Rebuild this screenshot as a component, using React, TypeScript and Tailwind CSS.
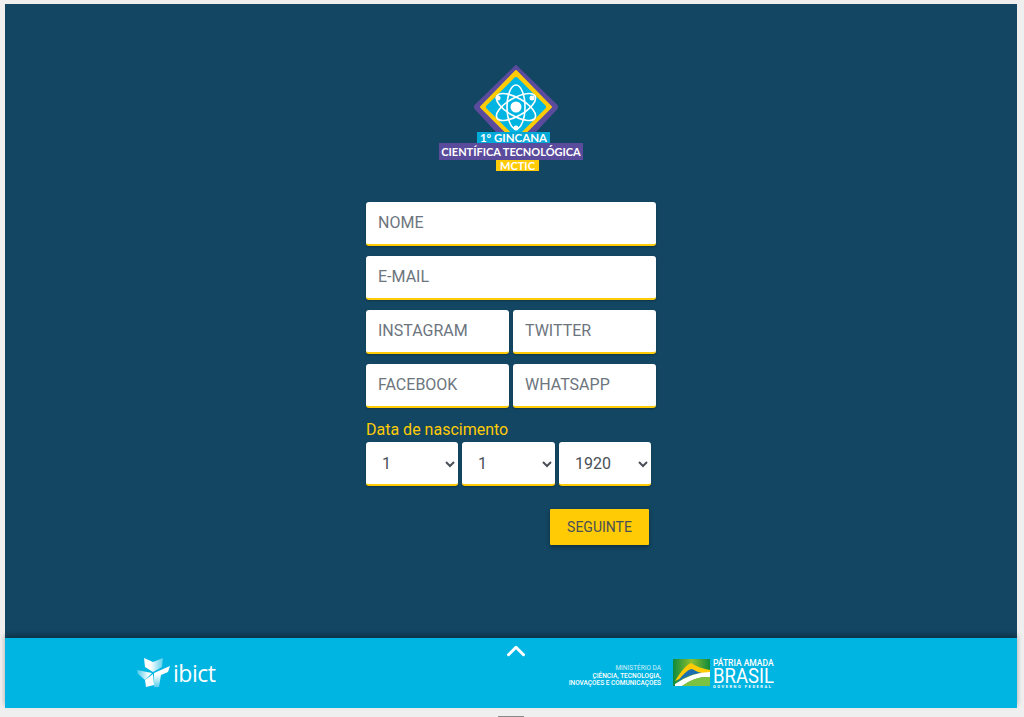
import React from 'react';
import { ChevronUp } from 'lucide-react';

const font = { fontFamily: 'Roboto, sans-serif' };

const TextField = ({ placeholder, className = '' }: { placeholder: string; className?: string }) => (
  <input
    placeholder={placeholder}
    className={`h-[44px] min-w-0 bg-white rounded-[3px] border-b-2 border-[#ffcb05] pl-3 pr-2 pb-[2px] text-base text-[#495057] placeholder:text-[#6c757d] outline-none shadow-[0_1px_2px_rgba(0,0,0,0.25)] ${className}`}
  />
);

const DateSelect = ({ value, options, className }: { value: string; options: string[]; className: string }) => (
  <select
    defaultValue={value}
    className={`h-[44px] bg-white rounded-[3px] border-b-2 border-[#ffcb05] pl-3 pr-[2px] text-base text-[#495057] outline-none shadow-[0_1px_2px_rgba(0,0,0,0.25)] ${className}`}
  >
    {options.map((o) => (
      <option key={o}>{o}</option>
    ))}
  </select>
);

const GincanaLogo = () => (
  <div className="flex flex-col items-start w-[144px] h-[108px]">
    <svg width="88" height="72" viewBox="0 0 88 72" className="shrink-0 ml-[33px]">
      <path d="M44 1 L84 40 Q86 42 84 44 L58 72 L30 72 L4 44 Q2 42 4 40 Z" fill="#5b4b9d" stroke="#5b4b9d" strokeWidth="2" strokeLinejoin="round" />
      <path d="M44 6 L79 42 L49 72 L39 72 L9 42 Z" fill="#ffcb05" stroke="#ffcb05" strokeWidth="2" strokeLinejoin="round" />
      <path d="M44 14 L72 42 L44 70 L16 42 Z" fill="#00b5e2" stroke="#00b5e2" strokeWidth="4" strokeLinejoin="round" />
      <g fill="none" stroke="#fff" strokeWidth="1.6">
        <ellipse cx="44" cy="42" rx="9" ry="22" />
        <ellipse cx="44" cy="42" rx="9" ry="22" transform="rotate(60 44 42)" />
        <ellipse cx="44" cy="42" rx="9" ry="22" transform="rotate(-60 44 42)" />
      </g>
      <circle cx="44" cy="42" r="5.5" fill="#fff" />
      <circle cx="26" cy="33" r="2.5" fill="#fff" />
      <circle cx="60" cy="33" r="2.5" fill="#fff" />
      <circle cx="44" cy="63" r="2.5" fill="#fff" />
    </svg>
    <div className="flex flex-col items-start -mt-[5px] font-bold text-white leading-none" style={{ fontFamily: 'Lato, sans-serif' }}>
      <div className="ml-[38px] h-[11px] w-[73px] bg-[#00a9d8] text-[11.5px] leading-[12px] text-center whitespace-nowrap">1º GINCANA</div>
      <div className="h-[17px] w-[144px] bg-[#5b4b9d] text-[11px] leading-[17px] text-center whitespace-nowrap">CIENTÍFICA TECNOLÓGICA</div>
      <div className="ml-[57px] h-[11px] w-[43px] bg-[#ffcb05] text-[11px] leading-[11px] text-center">MCTIC</div>
    </div>
  </div>
);

const IbictLogo = () => (
  <div className="flex items-center">
    <svg width="33" height="30" viewBox="0 0 33 30">
      <defs>
        <linearGradient id="fadeRight" x1="0" y1="0" x2="1" y2="0">
          <stop offset="0.35" stopColor="#fff" />
          <stop offset="1" stopColor="#fff" stopOpacity="0.35" />
        </linearGradient>
        <linearGradient id="fadeLeft" x1="1" y1="0" x2="0" y2="0">
          <stop offset="0.2" stopColor="#fff" />
          <stop offset="1" stopColor="#fff" stopOpacity="0.3" />
        </linearGradient>
        <linearGradient id="fadeDown" x1="0" y1="0" x2="0" y2="1">
          <stop offset="0.4" stopColor="#fff" />
          <stop offset="1" stopColor="#fff" stopOpacity="0.35" />
        </linearGradient>
      </defs>
      <path d="M7 0 L16 4 L26 0 L25 9 L16 14 L8 9 Z" fill="url(#fadeRight)" />
      <path d="M0 12 L15 15 L8 22 L1 16 Z" fill="url(#fadeLeft)" />
      <path d="M17 15 L33 8 L31 14 L24 17 L22 29 L17 29 Z" fill="url(#fadeDown)" />
      <path d="M8 22 L16 16 L17 27 L9 29 Z" fill="#fff" />
    </svg>
    <span className="text-white text-[23px] leading-none ml-[3px] tracking-[-0.5px] font-medium" style={{ fontFamily: '"Open Sans", sans-serif' }}>ibict</span>
  </div>
);

const BrasilLogo = () => (
  <svg width="37" height="27" viewBox="0 0 37 27" className="shrink-0">
    <defs>
      <linearGradient id="flagGreen" x1="0" y1="0" x2="1" y2="0">
        <stop offset="0" stopColor="#0e8a3c" />
        <stop offset="0.5" stopColor="#8fbf2f" />
        <stop offset="1" stopColor="#0e8a3c" />
      </linearGradient>
    </defs>
    <rect width="37" height="27" fill="url(#flagGreen)" />
    <path d="M2 22 Q12 6 18 4 Q25 9 37 11 V14 Q20 13 2 22 Z" fill="#ffcb05" />
    <path d="M4 23 Q14 10 19 10 Q24 13 29 14 Q16 15 4 23 Z" fill="#1b6fb0" />
    <path d="M2 25 Q20 13 37 13 V18 Q22 17 9 27 H2 Z" fill="#fff" />
    <path d="M9 27 Q22 17 37 18 V27 Z" fill="#7cc242" />
  </svg>
);

export default function App() {
  return (
    <div className="w-[1024px] h-[717px] overflow-hidden bg-[#efefef] pt-[4px] pl-[5px] pr-[7px] flex flex-col" style={font}>
      <main className="h-[634px] shrink-0 bg-[#134662] flex flex-col items-center pt-[61px]">
        <GincanaLogo />
        <form className="w-[290px] mt-[29px] flex flex-col gap-[10px]">
          <TextField placeholder="NOME" />
          <TextField placeholder="E-MAIL" />
          <div className="flex gap-[4px]">
            <TextField placeholder="INSTAGRAM" className="w-[143px]" />
            <TextField placeholder="TWITTER" className="w-[143px]" />
          </div>
          <div className="flex gap-[4px]">
            <TextField placeholder="FACEBOOK" className="w-[143px]" />
            <TextField placeholder="WHATSAPP" className="w-[143px]" />
          </div>
          <div className="flex flex-col">
            <label className="text-base leading-[24px] text-[#ffcb05] h-[24px]">Data de nascimento</label>
            <div className="flex gap-[4px]">
              <DateSelect value="1" options={['1', '2', '3']} className="w-[92px]" />
              <DateSelect value="1" options={['1', '2', '3']} className="w-[93px]" />
              <DateSelect value="1920" options={['1920', '1921', '1922']} className="w-[92px]" />
            </div>
          </div>
          <div className="flex justify-end pr-[7px] mt-[13px]">
            <button type="button" className="w-[99px] h-[36px] bg-[#ffcb05] text-[#495057] text-sm rounded-[1px] shadow-[0_2px_4px_rgba(0,0,0,0.35)]">
              SEGUINTE
            </button>
          </div>
        </form>
      </main>

      <footer className="h-[70px] shrink-0 bg-[#00b5e2] shadow-[0_-3px_5px_rgba(0,0,0,0.3)] flex items-start">
        <div className="ml-[132px] mt-[20px] w-[84px]">
          <IbictLogo />
        </div>
        <ChevronUp className="ml-[280px] -mt-[2.5px] text-white shrink-0" size={30} strokeWidth={2.4} />
        <div className="ml-[36px] mt-[27px] w-[94px] text-right text-white text-[6.5px] leading-[7.5px] font-medium whitespace-nowrap flex flex-col items-end">
          <span className="font-normal opacity-80">MINISTÉRIO DA</span>
          <span>CIÊNCIA, TECNOLOGIA,</span>
          <span>INOVAÇÕES E COMUNICAÇÕES</span>
        </div>
        <div className="ml-[12px] mt-[21px]">
          <BrasilLogo />
        </div>
        <div className="ml-[3px] mt-[20px] text-white flex flex-col w-[60px]">
          <span className="text-[8.5px] leading-[10px] font-medium whitespace-nowrap">PÁTRIA AMADA</span>
          <span className="text-[18.5px] leading-[16px] scale-y-[1.12] whitespace-nowrap">BRASIL</span>
          <span className="text-[4px] leading-[5px] tracking-[1.55px] font-bold whitespace-nowrap">GOVERNO FEDERAL</span>
        </div>
      </footer>

      <div className="h-[9px]">
        <div className="ml-[493px] mt-[8px] w-[26px] h-[1px] bg-[#888]" />
      </div>
    </div>
  );
}
